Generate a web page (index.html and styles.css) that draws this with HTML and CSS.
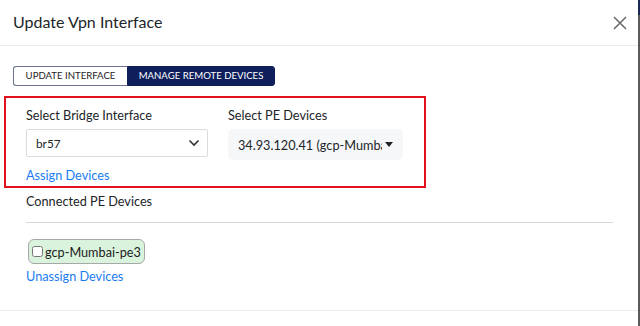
FILE: index.html
```html
<!DOCTYPE html>
<html>
<head>
<meta charset="utf-8">
<link rel="stylesheet" href="styles.css">
</head>
<body>
<div class="page">
  <div class="modal">
    <div class="modal-header">
      <h1 class="title">Update Vpn Interface</h1>
      <span class="close">
        <svg width="14" height="14" viewBox="0 0 14 14"><path d="M1 1L13 13M13 1L1 13" stroke="#6b6b6b" stroke-width="1.6" fill="none"/></svg>
      </span>
    </div>
    <div class="modal-body">
      <div class="tabs">
        <button class="tab">UPDATE INTERFACE</button>
        <button class="tab active">MANAGE REMOTE DEVICES</button>
      </div>
      <div class="assign-box">
        <div class="field bridge">
          <label class="label">Select Bridge Interface</label>
          <div class="select">
            <span>br57</span>
            <svg width="12" height="8" viewBox="0 0 12 8"><path d="M1.5 1.5L6 6L10.5 1.5" stroke="#333" stroke-width="1.6" fill="none"/></svg>
          </div>
          <a class="link">Assign Devices</a>
        </div>
        <div class="field pe">
          <label class="label">Select PE Devices</label>
          <div class="dropdown">
            <span class="dd-text">34.93.120.41 (gcp-Mumbai-pe3)</span>
            <span class="caret"></span>
          </div>
        </div>
      </div>
      <div class="connected">
        <div class="label">Connected PE Devices</div>
        <div class="rule"></div>
        <div class="chips">
          <label class="chip"><input type="checkbox" class="cb"><span>gcp-Mumbai-pe3</span></label>
        </div>
        <a class="link">Unassign Devices</a>
      </div>
    </div>
    <div class="modal-footer"></div>
  </div>
  <div class="edge"><div class="edge-top"></div></div>
</div>
</body>
</html>
```

FILE: styles.css
```css
* { box-sizing: border-box; }
html, body { margin: 0; padding: 0; background: #fff; }
body {
  font-family: Lato, "Open Sans", sans-serif;
  color: #212529;
  width: 640px;
  height: 326px;
  overflow: hidden;
}
.page { display: flex; height: 326px; }
.modal { flex: 1; display: flex; flex-direction: column; background: #fff; }
.edge { width: 2px; background: #5a5a5a; }
.edge-top { height: 15px; background: #1a2a55; }

.modal-header {
  height: 46px;
  border-bottom: 1px solid #e9ecef;
  display: flex;
  align-items: center;
  justify-content: space-between;
  padding: 0 11px 0 13px;
}
.title { margin: 0; font-size: 16px; font-weight: 400; color: #212529; padding-bottom: 2px; }
.close { display: flex; }

.modal-body { padding: 20px 0 0 0; height: 265px; border-bottom: 1px solid #e9ecef; }
.tabs { display: flex; padding-left: 13px; }
.tab {
  font-family: Lato, sans-serif;
  font-size: 9.6px;
  height: 20px;
  padding: 0;
  text-align: center;
  white-space: nowrap;
  border: 1px solid #6b7390;
  background: #fff;
  color: #1d1d1d;
  margin: 0;
  line-height: 18px;
}
.tab:first-child { border-radius: 3px 0 0 3px; border-right: none; width: 114px; }
.tab.active { background: #0f1f5c; border-color: #0f1f5c; color: #fff; border-radius: 0 3px 3px 0; width: 148px; }

.assign-box {
  margin: 10px 0 0 4px;
  width: 422px;
  height: 92px;
  border: 2px solid #e3101d;
  display: flex;
  gap: 20px;
  padding: 9px 0 0 20px;
}
.label { font-size: 12.7px; line-height: 16px; display: block; color: #212529; }
.field.bridge { width: 182px; }
.select {
  margin-top: 6px;
  height: 28px;
  border: 1px solid #dcdcdc;
  border-radius: 2px;
  display: flex;
  align-items: center;
  justify-content: space-between;
  padding: 0 7px 0 9px;
  font-size: 11.8px;
  color: #212529;
}
.link { display: block; color: #1a7cf2; font-size: 12.7px; line-height: 16px; margin-top: 10px; }
.dropdown {
  margin-top: 6px;
  width: 175px;
  height: 31px;
  background: #f6f7f9;
  border-radius: 5px;
  display: flex;
  align-items: center;
  padding: 0 10px 0 10px;
  font-size: 12.7px;
  color: #212529;
}
.dd-text { white-space: nowrap; overflow: hidden; width: 145px; }
.caret {
  margin-left: 3px;
  width: 0; height: 0;
  border-left: 4px solid transparent;
  border-right: 4px solid transparent;
  border-top: 5px solid #222;
}

.connected { padding: 5px 25px 0 26px; }
.rule { height: 1px; background: #d6d6d6; margin: 13px 0 0 0; }
.chips { display: flex; margin-top: 16px; padding-left: 2px; }
.chip {
  display: flex;
  align-items: center;
  height: 25px;
  padding: 0 3px 0 3px;
  background: #daf3dc;
  border: 1px solid #a8a8a8;
  border-radius: 6px;
  font-size: 12.7px;
  color: #1d1d1d;
}
.cb { margin: 0 2px 0 0; width: 11px; height: 11px; }
.connected .link { margin-top: 4px; }
.modal-footer { flex: 1; }
```
